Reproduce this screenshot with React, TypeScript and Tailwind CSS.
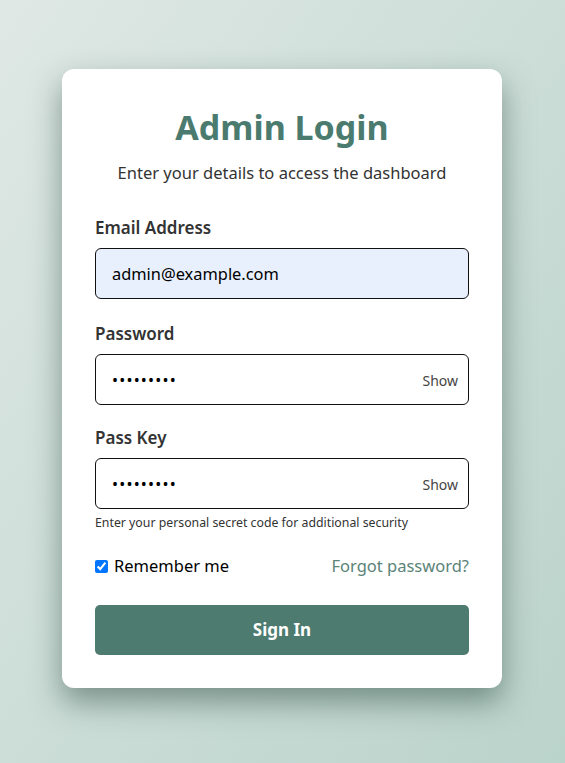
import { useState } from 'react';

function SecretField({ label, value, hint }: { label: string; value: string; hint?: string }) {
  const [shown, setShown] = useState(false);
  return (
    <div className="flex flex-col">
      <label className="text-[17px] font-semibold text-[#333] leading-[22px] mb-[9px]">{label}</label>
      <div className="relative">
        <input
          type={shown ? 'text' : 'password'}
          defaultValue={value}
          className="w-full h-[51px] rounded-[6px] border border-[#111] bg-white pl-4 pr-16 text-[16px] tracking-[1.2px] text-black outline-none"
        />
        <button
          type="button"
          onClick={() => setShown(!shown)}
          className="absolute right-[11px] top-1/2 -translate-y-1/2 text-[14px] text-[#444]"
        >
          {shown ? 'Hide' : 'Show'}
        </button>
      </div>
      {hint && <p className="text-[12.3px] text-[#333] mt-[6px] leading-[16px]">{hint}</p>}
    </div>
  );
}

export default function App() {
  const [remember, setRemember] = useState(true);

  return (
    <div
      className="min-h-[763px] w-full flex items-start justify-center pt-[69px] pr-px bg-gradient-to-br from-[#dfe8e5] to-[#bad3cb]"
      style={{ fontFamily: "'Noto Sans', 'Open Sans', sans-serif" }}
    >
      <div className="w-[440px] bg-white rounded-[12px] px-[33px] pt-[36px] pb-[33px] shadow-[0_14px_30px_rgba(40,70,60,0.5)]">

        {/* Header */}
        <h1 className="text-center text-[34px] font-bold text-[#4b7b6f] leading-[44px]">Admin Login</h1>
        <p className="text-center text-[16.5px] text-[#333] mt-[12px] leading-[24px]">
          Enter your details to access the dashboard
        </p>

        <form className="flex flex-col mt-[32px]" onSubmit={(e) => e.preventDefault()}>

          {/* Email */}
          <div className="flex flex-col">
            <label className="text-[17px] font-semibold text-[#333] leading-[22px] mb-[9px]">Email Address</label>
            <input
              type="email"
              defaultValue="admin@example.com"
              className="w-full h-[51px] rounded-[6px] border border-[#111] bg-[#e8f0fe] px-4 text-[16.4px] text-black outline-none"
            />
          </div>

          <div className="mt-[24px]">
            <SecretField label="Password" value="secret123" />
          </div>

          <div className="mt-[22px]">
            <SecretField
              label="Pass Key"
              value="passkey12"
              hint="Enter your personal secret code for additional security"
            />
          </div>

          {/* Remember / Forgot */}
          <div className="flex flex-row items-center justify-between mt-[23px]">
            <label className="flex flex-row items-center gap-[6px] text-[16.5px] text-black">
              <input
                type="checkbox"
                checked={remember}
                onChange={() => setRemember(!remember)}
                className="w-[13px] h-[13px] accent-[#0075ff]"
              />
              Remember me
            </label>
            <a href="#" className="text-[16.5px] text-[#5b8378]">Forgot password?</a>
          </div>

          <button
            type="submit"
            className="mt-[26px] h-[50px] w-full rounded-[5px] bg-[#4d7b70] text-white text-[17px] font-bold"
          >
            Sign In
          </button>
        </form>
      </div>
    </div>
  );
}
